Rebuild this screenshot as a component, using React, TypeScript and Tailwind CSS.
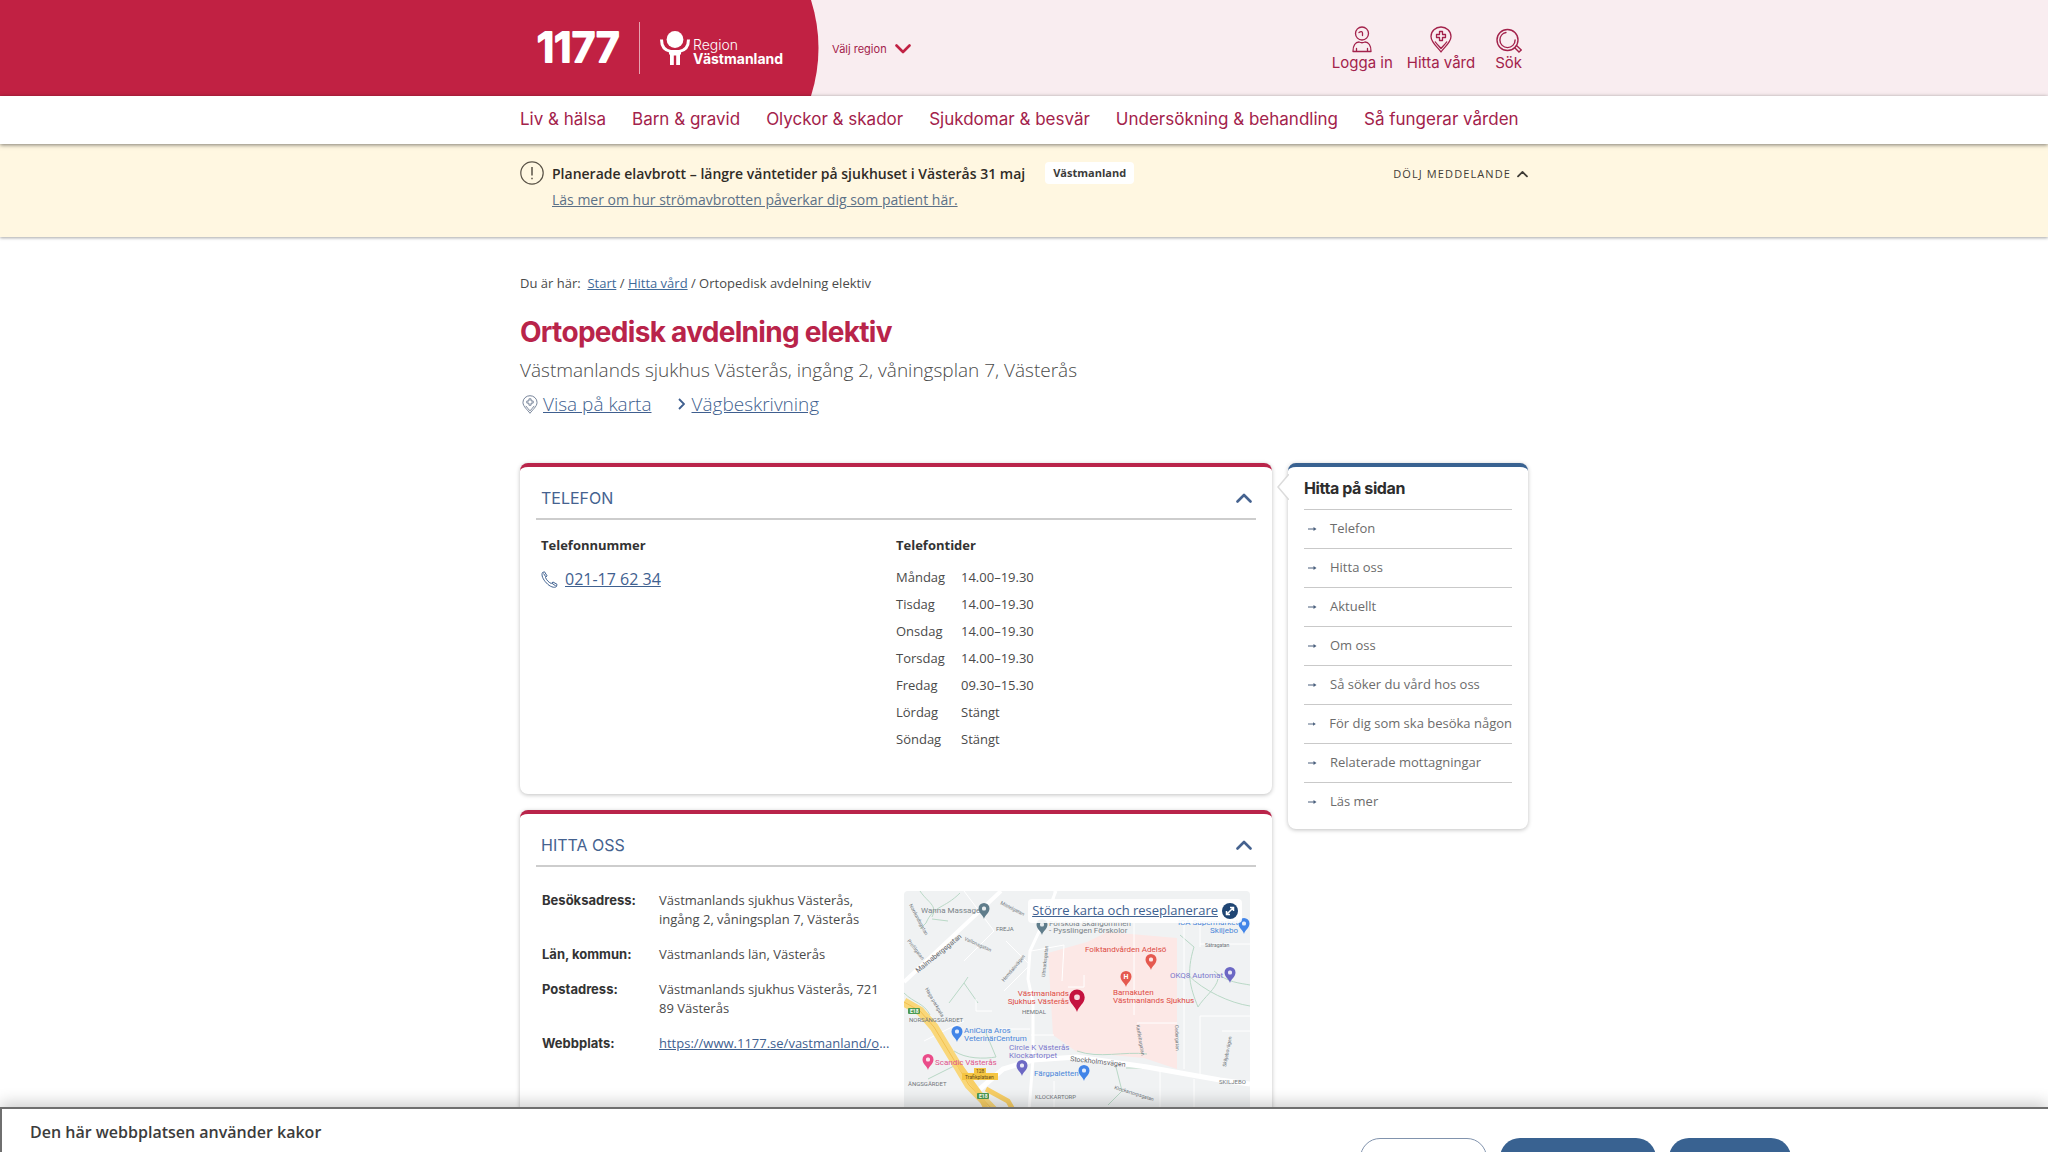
import type { ReactNode } from "react";

const navLinks = [
  "Liv & hälsa",
  "Barn & gravid",
  "Olyckor & skador",
  "Sjukdomar & besvär",
  "Undersökning & behandling",
  "Så fungerar vården",
];

const phoneHours = [
  { day: "Måndag", time: "14.00–19.30" },
  { day: "Tisdag", time: "14.00–19.30" },
  { day: "Onsdag", time: "14.00–19.30" },
  { day: "Torsdag", time: "14.00–19.30" },
  { day: "Fredag", time: "09.30–15.30" },
  { day: "Lördag", time: "Stängt" },
  { day: "Söndag", time: "Stängt" },
];

const pageLinks = [
  "Telefon",
  "Hitta oss",
  "Aktuellt",
  "Om oss",
  "Så söker du vård hos oss",
  "För dig som ska besöka någon",
  "Relaterade mottagningar",
  "Läs mer",
];

const Logo = () => (
  <a href="#" aria-label="1177 Region Västmanland" className="flex items-center">
    <svg width="84" height="36" viewBox="0 0 84 36" className="overflow-visible">
      <text
        x="0"
        y="32"
        fontFamily="Inter, sans-serif"
        fontWeight="600"
        fontSize="41"
        fill="#fff"
        stroke="#fff"
        strokeWidth="2"
        strokeLinejoin="round"
      >
        1177
      </text>
    </svg>
    <span className="ml-[18px] h-[52px] w-px bg-[#e7a3b0]" />
    <svg width="30" height="34" viewBox="0 0 30 34" className="ml-[20px]">
      <circle cx="15" cy="8.500" r="8.400" fill="#fff" />
      <path d="M1.500 8.500 C1.500 15.500 5 19.500 10.800 20.500 M28.500 8.500 C28.500 15.500 25 19.500 19.200 20.500" fill="none" stroke="#fff" strokeWidth="3" />
      <path d="M9 19 H21 V23 L20 24 V34 H16.200 V24.500 H13.800 V34 H10 V24 L9 23Z" fill="#fff" />
    </svg>
    <span className="ml-[3px] flex flex-col pt-[7px] text-[14px] leading-[14px] text-white">
      <span className="font-light">Region</span>
      <span className="font-bold">Västmanland</span>
    </span>
  </a>
);

const Chevron = ({ className }: { className: string }) => (
  <svg viewBox="0 0 16 10" className={className} fill="none" stroke="currentColor" strokeWidth="2.600" strokeLinecap="round" strokeLinejoin="round">
    <path d="M1.500 8.500 L8 2 L14.500 8.500" />
  </svg>
);

const PersonIcon = () => (
  <svg width="20" height="27" viewBox="0 0 20 27" fill="none" stroke="currentColor" strokeWidth="1.300" strokeLinejoin="round" strokeLinecap="round">
    <circle cx="10" cy="7.500" r="6.500" />
    <path d="M7 6.500 C9 5 10.500 5.500 10.500 7 V9.500 M1 25.500 C.8 19.500 3.500 16 7 16 C9 17 11 17 13 16 C16.500 16 19.200 19.500 19 25.500Z M4.500 25.500 V22.500 M15.500 25.500 V22.500" />
  </svg>
);

const PlaceIcon = ({ className }: { className: string }) => (
  <svg viewBox="0 0 22 27" className={className} fill="none" stroke="currentColor" strokeWidth="1.300" strokeLinejoin="round">
    <path d="M11 26 C8 21.500 1 16.500 1 10.500 A10 9.500 0 0 1 21 10.500 C21 16.500 14 21.500 11 26Z" />
    <path d="M9.500 5.500 H12.500 V8.500 H15.500 V11.500 H12.500 V14.500 H9.500 V11.500 H6.500 V8.500 H9.500Z M5 15.500 C7 18.500 9.500 20.500 11 22.500 C12.500 20.500 15 18.500 17 15.500" />
  </svg>
);

const SearchIcon = () => (
  <svg width="26" height="27" viewBox="0 0 26 27" fill="none" stroke="currentColor" strokeWidth="1.400" strokeLinecap="round">
    <circle cx="11.500" cy="14" r="10.500" />
    <circle cx="11.500" cy="14" r="7.600" strokeDasharray="34 14" />
    <path d="M18.500 21.500 L23 26 L25.300 24 L20.500 19.500" />
  </svg>
);

const PhoneIcon = () => (
  <svg width="17" height="17" viewBox="0 0 17 17" fill="none" stroke="currentColor" strokeWidth="1" strokeLinejoin="round">
    <path d="M1.500 1.500 L3.500 .8 L6 4.800 L4.500 6.500 C5.500 9 7.500 11.200 10.200 12.500 L12 11 L16 13.300 L15.500 15.500 C13.500 17.500 8.500 15.500 5.500 12 C2 8.500 0 4 1.500 1.500Z M2.500 2.500 L4.800 5.800 M11 12.300 L14.800 15" />
  </svg>
);

type CardProps = { title: string; children: ReactNode };

const Card = ({ title, children }: CardProps) => (
  <section className="rounded-lg border-t-4 border-[#b9244a] bg-white px-4 shadow-[0_1px_4px_rgba(0,0,0,0.25)]">
    <h2 className="border-b-2 border-[#cdcdcd]">
      <button type="button" aria-expanded="true" className="flex h-[51px] w-full items-center justify-between pt-[14px] pr-1 pb-1 pl-[5px] text-[#45628f]">
        <span className="text-[16px] uppercase">{title}</span>
        <Chevron className="h-[10px] w-4" />
      </button>
    </h2>
    {children}
  </section>
);

type PinProps = { x: number; y: number; color: string; mark?: string; big?: boolean };

const Pin = ({ x, y, color, mark, big }: PinProps) => (
  <g transform={`translate(${x} ${y}) scale(${big ? 1.4 : 1})`}>
    <path d="M0 0 C-1 -4 -5.500 -6 -5.500 -10.500 A5.500 5.500 0 0 1 5.500 -10.500 C5.500 -6 1 -4 0 0Z" fill={color} />
    {mark ? (
      <text x="0" y="-8" textAnchor="middle" fontSize="7" fontWeight="700" fill="#fff">{mark}</text>
    ) : (
      <rect x="-2" y="-12.500" width="4" height="4" rx="1.500" fill="#fff" opacity="0.85" />
    )}
  </g>
);

const areaNames = [
  { x: 92, y: 40, text: "FREJA" },
  { x: 118, y: 123, text: "HEMDAL" },
  { x: 5, y: 131, text: "NORSÄNGSGÄRDET" },
  { x: 4, y: 195, text: "ÄNGSGÄRDET" },
  { x: 131, y: 208, text: "KLOCKARTORP" },
  { x: 315, y: 193, text: "SKILJEBO" },
];

const streetNames = [
  { x: 5, y: 14, angle: 62, text: "Norrlundsgatan" },
  { x: 3, y: 50, angle: 52, text: "Profilgatan" },
  { x: 96, y: 13, angle: 27, text: "Mistelgatan" },
  { x: 60, y: 49, angle: 24, text: "Vallonsgatan" },
  { x: 100, y: 91, angle: -50, text: "Hemdalsvägen" },
  { x: 141, y: 86, angle: -84, text: "Utmarksgatan" },
  { x: 21, y: 98, angle: 60, text: "Haga parkgata" },
  { x: 232, y: 134, angle: 80, text: "Karlfeltsgatan" },
  { x: 271, y: 134, angle: 88, text: "Cedergatan" },
  { x: 322, y: 176, angle: -79, text: "Skiljebovägen" },
  { x: 301, y: 56, angle: 0, text: "Sätragatan" },
  { x: 210, y: 198, angle: 17, text: "Klockartorpsgatan" },
];

const MapPicture = () => (
  <svg viewBox="0 0 346 260" className="block w-full" fontFamily="Roboto, sans-serif">
    <rect width="346" height="260" fill="#f0f2f3" />
    <path d="M144 62 L183 51 L203 41 L273 47 V178 L240 167 L173 161 L149 144Z" fill="#fce8e6" />
    {/* paths and greenery */}
    <path d="M16 0 C24 12 34 14 28 26 M56 2 C40 18 30 14 22 32 L16 38 M28 28 L44 30 M45 112 L60 92 L74 112 M60 92 L64 86 M0 102 C10 112 20 112 26 124 M50 160 C62 168 80 168 92 166 L82 142 M24 188 L54 173 M276 44 L290 56 C282 82 286 96 294 116 C300 106 312 98 314 88 M284 84 C300 100 326 112 346 115 M310 80 C324 92 336 92 346 94 M222 177 H238 M212 176 L218 200 L204 214 M173 160 C195 168 220 160 243 163" fill="none" stroke="#b9d8c6" strokeWidth="1" />
    {/* side streets */}
    <path d="M60 0 L90 40 L60 70 M102 50 L126 74 L100 100 M150 0 V24 M127 60 L160 54 L158 90 M230 22 V124 M280 22 V178 M296 24 V56 M296 53 H346 M127 144 H150 M72 108 V120 H88 M96 138 H126 M296 125 H346 M296 125 V188 M233 132 H273 M20 150 L60 130 M256 178 V218 M290 188 V218 M150 190 V216 M318 140 H346 M180 84 V96 H164" fill="none" stroke="#fff" strokeWidth="1" />
    {/* main roads */}
    <path d="M0 91 L97 0" fill="none" stroke="#fff" strokeWidth="4" />
    <path d="M152 0 L140 30 L126 60 L124 88 L129 112 V168 L125 220" fill="none" stroke="#fff" strokeWidth="3" />
    <path d="M76 198 L99 178 L129 169 L173 166 L243 176 L316 189 L346 193" fill="none" stroke="#fff" strokeWidth="5" />
    <path d="M0 111 L16 120 L30 136 L50 169 L65 194 L92 222 L120 256" fill="none" stroke="#f9d77a" strokeWidth="9" />
    <path d="M0 111 L16 120 L30 136 L50 169 L65 194 L92 222 L120 256" fill="none" stroke="#f3c14f" strokeWidth="1" />
    <path d="M54 172 L74 200 L82 218 M82 198 L104 210 L112 224" fill="none" stroke="#f8cf66" strokeWidth="5" />

    <g fontSize="5" fill="#6f757a">
      {areaNames.map(({ x, y, text }) => (
        <text key={text} x={x} y={y} fontSize="6">{text}</text>
      ))}
      {streetNames.map(({ x, y, angle, text }) => (
        <text key={text} transform={`translate(${x} ${y}) rotate(${angle})`}>{text}</text>
      ))}
    </g>
    <g fontSize="7" fill="#5f6368">
      <text transform="translate(14 82) rotate(-39)">Malmabergsgatan</text>
      <text transform="translate(166 170) rotate(6)">Stockholmsvägen</text>
    </g>

    <rect x="4" y="117" width="12" height="6" rx="1" fill="#4c9a52" />
    <text x="6" y="122" fontSize="5" fontWeight="700" fill="#fff">E18</text>
    <rect x="73" y="202" width="12" height="6" rx="1" fill="#4c9a52" />
    <text x="75" y="207" fontSize="5" fontWeight="700" fill="#fff">E18</text>
    <rect x="58" y="182" width="36" height="7" fill="#f5c542" />
    <rect x="70" y="177" width="12" height="6" fill="#f5c542" />
    <text x="72" y="182" fontSize="5" fill="#5f4b1a">128</text>
    <text x="61" y="188" fontSize="5" fill="#5f4b1a">Trafikplatsen</text>

    <g fontSize="8">
      <text x="17" y="22" fill="#7a8388">Wanna Massage</text>
      <text x="145" y="35" fill="#7a8388">Förskola Skångommen</text>
      <text x="145" y="42" fill="#7a8388">- Pysslingen Förskolor</text>
      <g fill="#dd4b45">
        <text x="181" y="61">Folktandvården Adelsö</text>
        <text x="209" y="104">Barnakuten</text>
        <text x="209" y="112">Västmanlands Sjukhus</text>
        <text x="165" y="105" textAnchor="end">Västmanlands</text>
        <text x="165" y="113" textAnchor="end">Sjukhus Västerås</text>
      </g>
      <g fill="#4a86d9">
        <text x="60" y="142">AniCura Aros</text>
        <text x="60" y="150">VeterinärCentrum</text>
        <text x="130" y="185">Färgpaletten</text>
        <text x="334" y="34" textAnchor="end">ICA Supermarket</text>
        <text x="334" y="42" textAnchor="end">Skiljebo</text>
      </g>
      <g fill="#7b78cc">
        <text x="105" y="159">Circle K Västerås</text>
        <text x="105" y="167">Klockartorpet</text>
        <text x="319" y="87" textAnchor="end">OKQ8 Automat</text>
      </g>
      <text x="31" y="174" fill="#e0558c">Scandic Västerås</text>
    </g>

    <Pin x={80} y={28} color="#607d8b" />
    <Pin x={138} y={44} color="#607d8b" />
    <Pin x={247} y={79} color="#e5594f" />
    <Pin x={222} y={96} color="#e5594f" mark="H" />
    <Pin x={326} y={92} color="#6c68c4" />
    <Pin x={340} y={43} color="#4285e8" />
    <Pin x={53} y={151} color="#4285e8" />
    <Pin x={24} y={179} color="#ea4c89" />
    <Pin x={118} y={185} color="#6c68c4" />
    <Pin x={180} y={190} color="#4285e8" />
    <Pin x={173} y={121} color="#c4123f" big />
  </svg>
);

const App = () => {
  return (
    <div className="flex h-screen flex-col overflow-hidden bg-white font-['Open_Sans',sans-serif] text-[13px] text-[#4a4a4a]">
      <div className="min-h-0 flex-1 overflow-hidden">
        <header className="font-[Inter,sans-serif] text-[#a3224b]">
          <div className="grid h-24 grid-cols-[1fr_minmax(0,1008px)_1fr] bg-[#f9edf0]">
            <div className="bg-[#c12143]" />
            <div className="flex">
              <div className="flex w-[291px] items-center bg-[#c12143] pl-[17px]">
                <Logo />
              </div>
              <svg width="8" height="96" viewBox="0 0 8 96" fill="#c12143">
                <path d="M0 0 Q15 48 0 96Z" />
              </svg>
              <button type="button" className="ml-[13px] flex items-center gap-2 pt-[2px] text-[11px]">
                Välj region
                <Chevron className="h-[10px] w-4 rotate-180 text-[#c12143]" />
              </button>
              <div className="ml-auto flex items-center gap-[14px] pt-[2px] pr-[6px] text-[15px] leading-5">
                <a href="#" className="flex flex-col items-center">
                  <PersonIcon />
                  Logga in
                </a>
                <a href="#" className="flex flex-col items-center">
                  <PlaceIcon className="h-[27px] w-[22px]" />
                  Hitta vård
                </a>
                <button type="button" className="ml-[6px] flex flex-col items-center">
                  <SearchIcon />
                  Sök
                </button>
              </div>
            </div>
          </div>
          <nav className="relative z-10 bg-white shadow-[0_1px_4px_rgba(0,0,0,0.5)]">
            <ul className="mx-auto flex h-12 max-w-[1008px] items-center gap-[26px] text-[17px] whitespace-nowrap">
              {navLinks.map((link) => (
                <li key={link}>
                  <a href="#">{link}</a>
                </li>
              ))}
            </ul>
          </nav>
        </header>

        <aside className="bg-[#fff7e1] shadow-[0_1px_3px_rgba(0,0,0,0.35)]">
          <div className="mx-auto flex h-[93px] max-w-[1008px] items-start gap-2 pt-[17px]">
            <svg width="24" height="24" viewBox="0 0 24 24" fill="none" stroke="#5a5347" strokeWidth="1.200">
              <circle cx="12" cy="12" r="11.200" />
              <path d="M12 6 V14.500 M12 16.800 V18.300" strokeWidth="1.500" />
            </svg>
            <div>
              <div className="flex h-6 items-center gap-5">
                <p className="text-[14px] font-semibold text-[#2f2b26]">
                  Planerade elavbrott – längre väntetider på sjukhuset i Västerås 31 maj
                </p>
                <span className="rounded-sm bg-white px-2 text-[11px] leading-[22px] font-bold text-[#3b3b3b]">Västmanland</span>
              </div>
              <a href="#" className="mt-[3px] block text-[14px] leading-6 text-[#5c7187] underline">
                Läs mer om hur strömavbrotten påverkar dig som patient här.
              </a>
            </div>
            <button type="button" className="ml-auto flex h-6 items-center gap-[6px] pt-[2px] text-[11px] tracking-widest text-[#3f3c36] uppercase">
              Dölj meddelande
              <Chevron className="h-2 w-[11px]" />
            </button>
          </div>
        </aside>

        <main className="mx-auto max-w-[1008px] pt-9">
          <nav aria-label="Brödsmulor" className="leading-5">
            Du är här:&nbsp;{" "}
            <a href="#" className="text-[#3f6a98] underline">Start</a> /{" "}
            <a href="#" className="text-[#3f6a98] underline">Hitta vård</a> / Ortopedisk avdelning elektiv
          </nav>
          <h1 className="mt-[21px] font-[Inter,sans-serif] text-[28px] leading-9 font-bold tracking-tight text-[#b9244a]">
            Ortopedisk avdelning elektiv
          </h1>
          <p className="mt-[6px] text-[19px] leading-7 font-light">
            Västmanlands sjukhus Västerås, ingång 2, våningsplan 7, Västerås
          </p>
          <div className="mt-[6px] flex gap-[26px] text-[19px] leading-7 font-light text-[#3f5f8f]">
            <a href="#" className="flex items-center gap-[5px] pl-[2px] underline">
              <PlaceIcon className="h-[19px] w-4 text-[#6b7a90]" />
              Visa på karta
            </a>
            <a href="#" className="flex items-center gap-[7px] underline">
              <svg width="7" height="12" viewBox="0 0 7 12" fill="none" stroke="#3f5f8f" strokeWidth="1.800">
                <path d="M1 1 L6 6 L1 11" />
              </svg>
              Vägbeskrivning
            </a>
          </div>

          <div className="mt-[45px] grid grid-cols-[minmax(0,1fr)_240px] items-start gap-4">
            <div className="flex flex-col gap-4 font-[Inter,sans-serif]">
              <Card title="Telefon">
                <div className="grid h-[274px] grid-cols-[355px_1fr] pt-[15px] pl-[5px] font-['Open_Sans',sans-serif]">
                  <div>
                    <h3 className="leading-5 font-bold text-[#333]">Telefonnummer</h3>
                    <a href="#" className="mt-3 flex items-center gap-[7px] text-[16px] leading-6 text-[#3f6190] underline">
                      <PhoneIcon />
                      021-17 62 34
                    </a>
                  </div>
                  <div>
                    <h3 className="leading-5 font-bold text-[#333]">Telefontider</h3>
                    <table className="mt-[9px] text-left">
                      <tbody>
                        {phoneHours.map(({ day, time }) => (
                          <tr key={day} className="h-[27px]">
                            <th scope="row" className="w-[65px] p-0 font-normal">{day}</th>
                            <td className="p-0">{time}</td>
                          </tr>
                        ))}
                      </tbody>
                    </table>
                  </div>
                </div>
              </Card>

              <Card title="Hitta oss">
                <div className="grid grid-cols-[346px_346px] gap-4 pt-6 pl-[6px] pb-8">
                  <dl className="grid grid-cols-[117px_minmax(0,1fr)] content-start gap-y-4 leading-[19px]">
                    <dt className="font-bold text-[#333]">Besöksadress:</dt>
                    <dd className="font-['Open_Sans',sans-serif]">Västmanlands sjukhus Västerås, ingång 2, våningsplan 7, Västerås</dd>
                    <dt className="font-bold text-[#333]">Län, kommun:</dt>
                    <dd className="font-['Open_Sans',sans-serif]">Västmanlands län, Västerås</dd>
                    <dt className="font-bold text-[#333]">Postadress:</dt>
                    <dd className="font-['Open_Sans',sans-serif]">Västmanlands sjukhus Västerås, 721 89 Västerås</dd>
                    <dt className="font-bold text-[#333]">Webbplats:</dt>
                    <dd className="font-['Open_Sans',sans-serif] whitespace-nowrap text-[#3f6190]">
                      <a href="#" className="underline">https://www.1177.se/vastmanland/o</a>...
                    </dd>
                  </dl>
                  <div className="relative overflow-hidden rounded-sm">
                    <MapPicture />
                    <a href="#" className="absolute top-2 right-2 flex h-6 items-center gap-1 rounded-sm bg-white/90 px-1 font-['Open_Sans',sans-serif] text-[13px] text-[#3f6190] underline">
                      Större karta och reseplanerare
                      <svg width="16" height="16" viewBox="0 0 16 16">
                        <circle cx="8" cy="8" r="8" fill="#1f4573" />
                        <path d="M4.500 8 V11.500 H8 M5 11 L11 5 M8 4.500 H11.500 V8" fill="none" stroke="#fff" strokeWidth="1.500" />
                      </svg>
                    </a>
                  </div>
                </div>
              </Card>
            </div>

            <nav aria-labelledby="page-links" className="relative rounded-lg border-t-4 border-[#396291] bg-white px-4 pb-2 shadow-[0_1px_4px_rgba(0,0,0,0.25)]">
              <svg width="12" height="26" viewBox="0 0 12 26" className="absolute top-[7px] -left-[11px]">
                <path d="M12 0 L1 13 L12 26" fill="#fff" stroke="#dcdcdc" strokeWidth="1.500" />
              </svg>
              <h2 id="page-links" className="flex h-[42px] items-center font-[Inter,sans-serif] text-[16px] font-bold tracking-tight text-[#2d2d2d]">
                Hitta på sidan
              </h2>
              <ul>
                {pageLinks.map((link) => (
                  <li key={link} className="border-t border-[#c9c9c9]">
                    <a href="#" className="flex h-[38px] items-center gap-[13px] pl-1 whitespace-nowrap text-[#6c6c6c]">
                      <svg width="9" height="6" viewBox="0 0 9 6">
                        <path d="M0 3 H6" stroke="#4a5f7d" strokeWidth="1" />
                        <path d="M5.500 1 L8.500 3 L5.500 5Z" fill="#4a5f7d" />
                      </svg>
                      {link}
                    </a>
                  </li>
                ))}
              </ul>
            </nav>
          </div>
        </main>
      </div>

      <section className="relative z-20 flex h-[45px] shrink-0 items-start justify-between border-t-2 border-l-2 border-[#6f6f6f] bg-white pr-[257px] pl-7 shadow-[0_-4px_16px_rgba(0,0,0,0.2)]">
        <h2 className="pt-[11px] text-[16px] leading-6 font-semibold text-[#3c3c3c]">Den här webbplatsen använder kakor</h2>
        <div className="flex gap-[13px] pt-[29px]">
          <button type="button" aria-label="Inställningar" className="h-10 w-[127px] rounded-[20px] border border-[#8193ad] bg-white" />
          <button type="button" aria-label="Godkänn alla kakor" className="h-10 w-[156px] rounded-[20px] bg-[#396291]" />
          <button type="button" aria-label="Jag förstår" className="h-10 w-[122px] rounded-[20px] bg-[#396291]" />
        </div>
      </section>
    </div>
  );
};

export default App;
